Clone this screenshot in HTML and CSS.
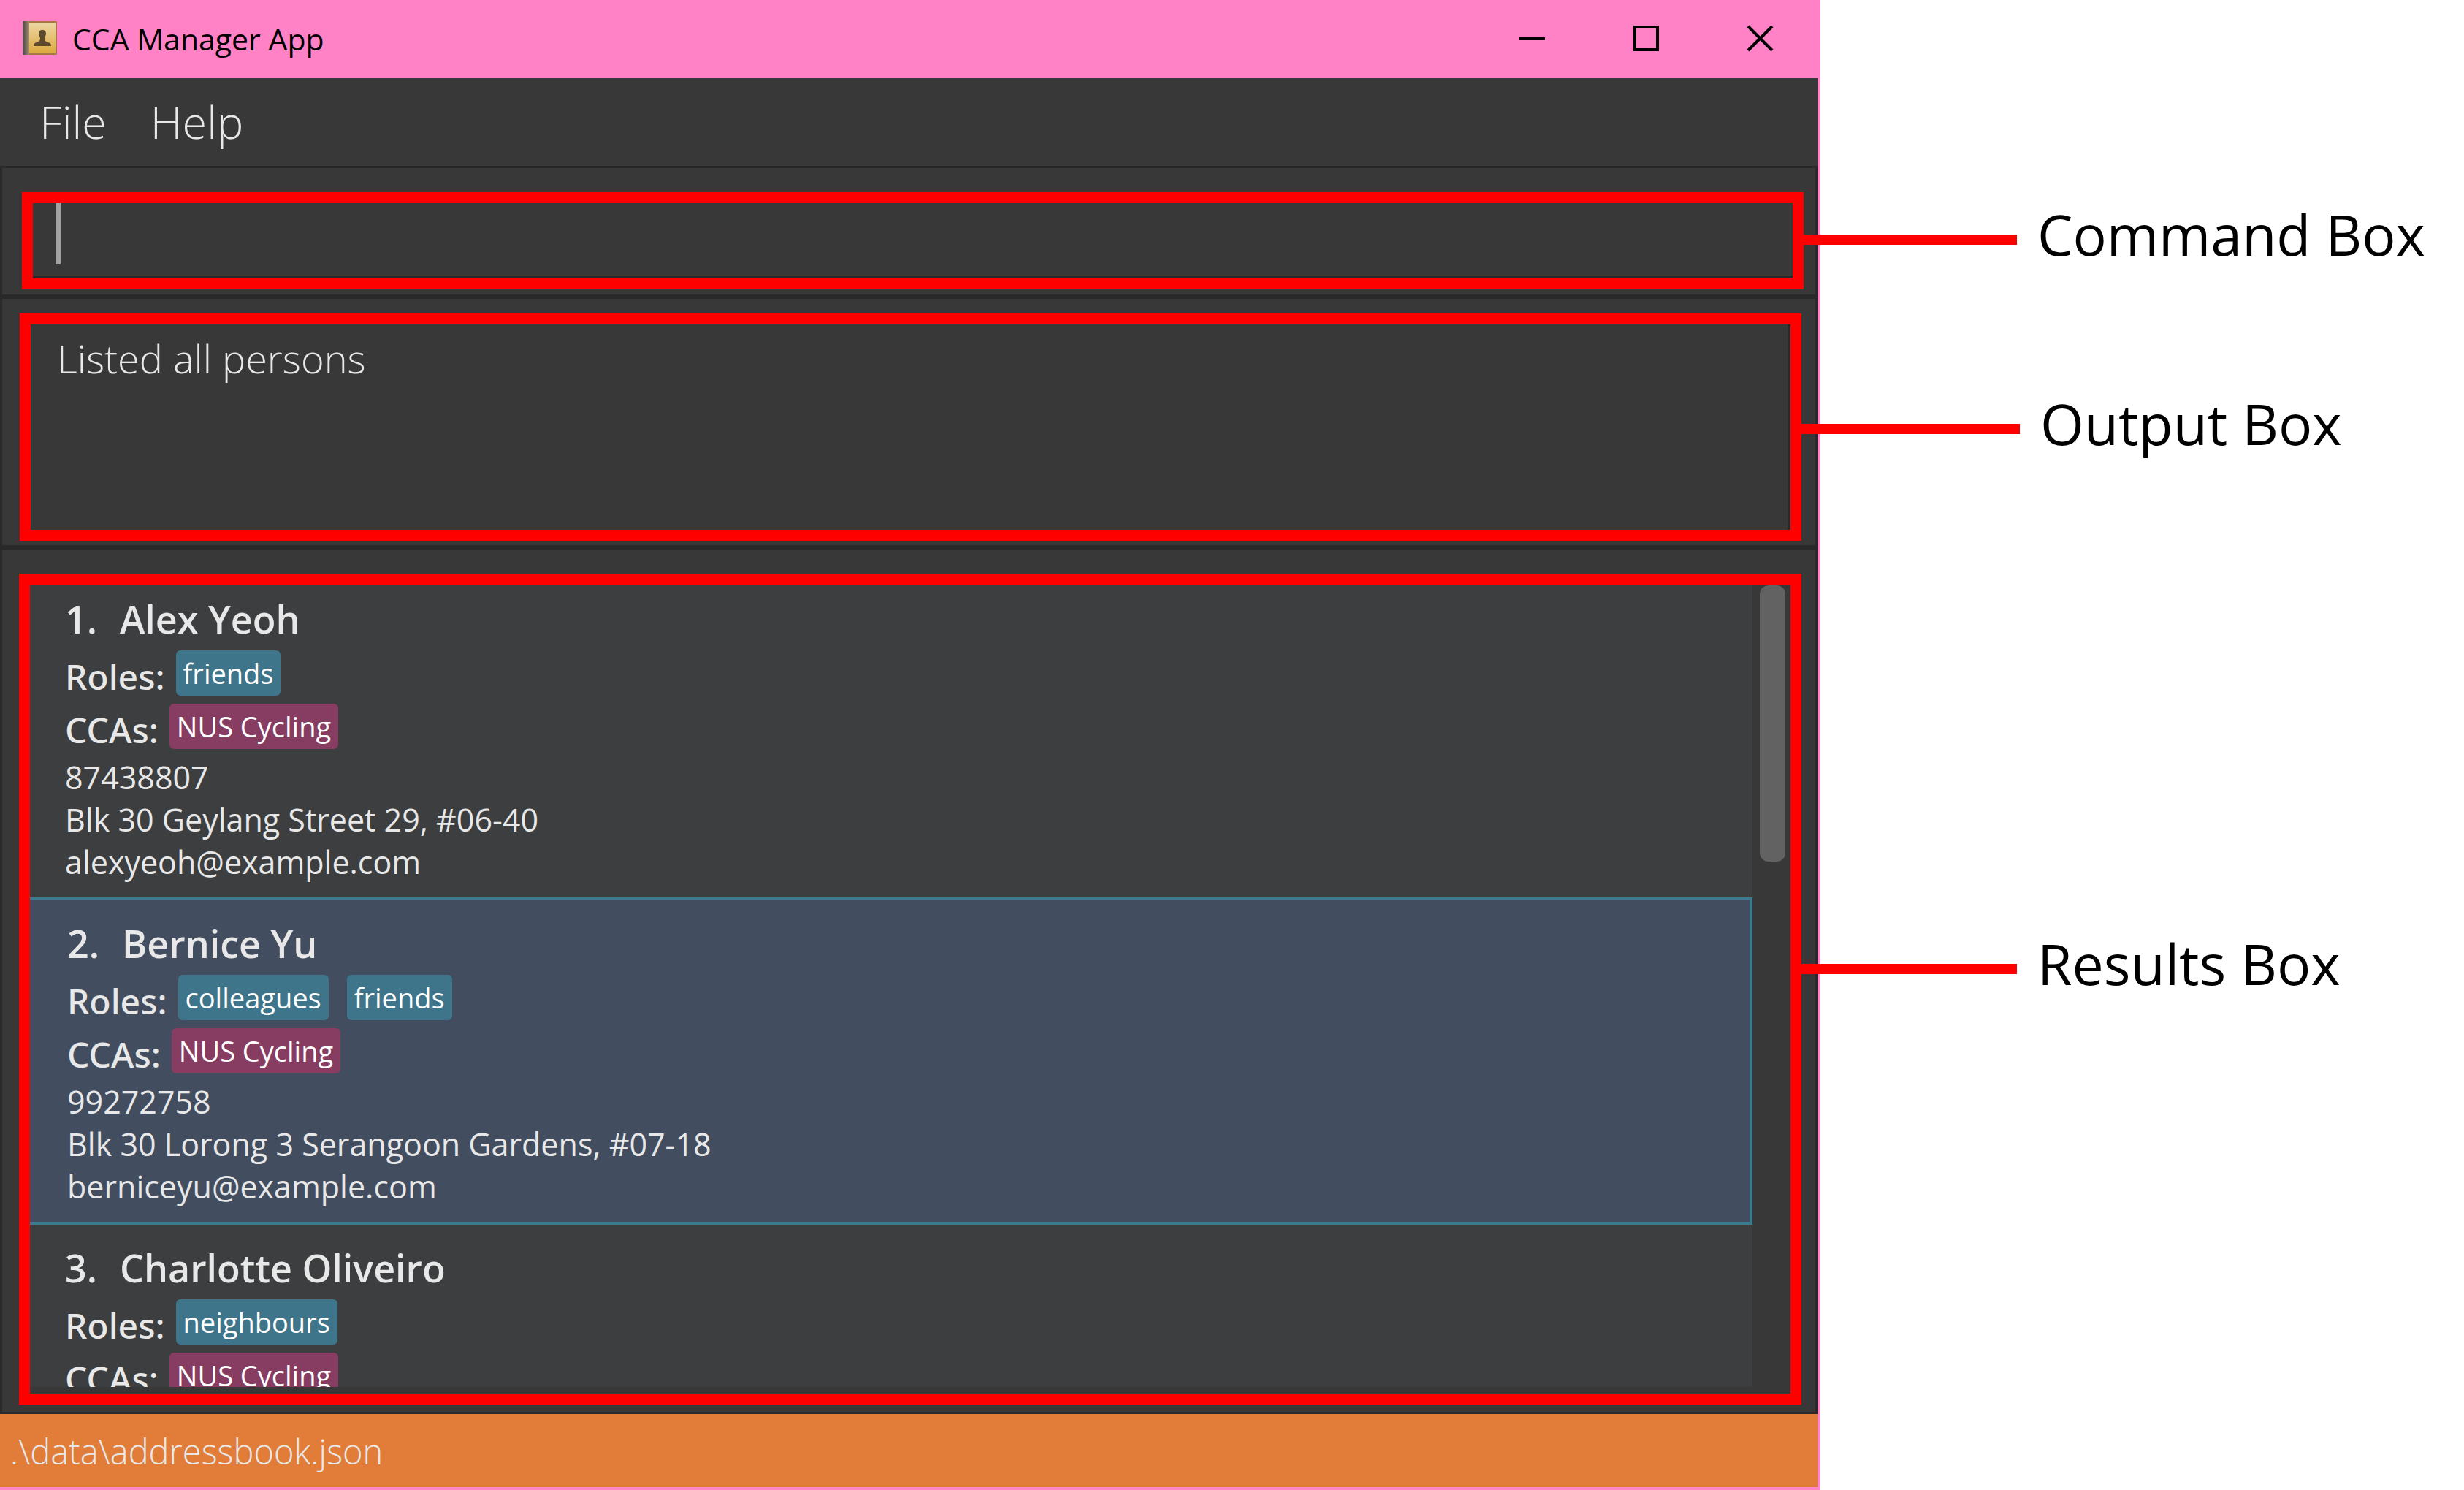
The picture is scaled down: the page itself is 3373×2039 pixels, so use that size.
FILE: index.html
```html
<!DOCTYPE html>
<html lang="en">
<head>
<meta charset="utf-8">
<title>CCA Manager App</title>
<link rel="stylesheet" href="styles.css">
</head>
<body>
<main class="app-window">
  <header class="titlebar">
    <svg class="app-icon" viewBox="0 0 49 48" aria-hidden="true">
      <defs>
        <linearGradient id="cover" x1="0" y1="0" x2="0" y2="1">
          <stop offset="0" stop-color="#ecd6a4"/>
          <stop offset="1" stop-color="#dda93f"/>
        </linearGradient>
        <linearGradient id="spine" x1="0" y1="0" x2="1" y2="0">
          <stop offset="0" stop-color="#4a4542"/>
          <stop offset="1" stop-color="#a08c70"/>
        </linearGradient>
      </defs>
      <rect x="1" y="1" width="47" height="46" rx="1" fill="#a87840"/>
      <rect x="8" y="3" width="38" height="42" fill="url(#cover)"/>
      <rect x="1" y="1" width="9" height="46" fill="url(#spine)"/>
      <path d="M28 13c3 0 5 2 5 5 0 3-2 4-2 7 0 3 2 4 5 5 3 1 4 2 4 5H16c0-3 1-4 4-5 3-1 5-2 5-5 0-3-2-4-2-7 0-3 2-5 5-5z" fill="#5d4a2c"/>
    </svg>
    <h1 class="title">CCA Manager App</h1>
    <div class="controls">
      <button class="control" type="button" aria-label="Minimize"><svg viewBox="0 0 37 37"><path d="M1 19h35"/></svg></button>
      <button class="control" type="button" aria-label="Maximize"><svg viewBox="0 0 37 37"><path d="M3 3h31v31H3z"/></svg></button>
      <button class="control" type="button" aria-label="Close"><svg viewBox="0 0 37 37"><path d="M2 2l33 33M35 2L2 35"/></svg></button>
    </div>
  </header>

  <nav class="menubar">
    <button class="menu" type="button">File</button>
    <button class="menu" type="button">Help</button>
  </nav>

  <section class="pane pane-command">
    <div class="frame">
      <div class="command-field">
        <input class="command-input" type="text" aria-label="Command">
        <span class="caret"></span>
      </div>
      <div class="callout"><span class="leader"></span><span class="callout-text">Command Box</span></div>
    </div>
  </section>

  <section class="pane pane-output">
    <div class="frame">
      <output class="output">Listed all persons</output>
      <div class="callout"><span class="leader"></span><span class="callout-text">Output Box</span></div>
    </div>
  </section>

  <section class="pane pane-results">
    <div class="frame">
      <ul class="persons">
        <li class="person">
          <h2 class="name"><span>1.</span><span>Alex Yeoh</span></h2>
          <div class="tags"><span class="tags-label">Roles:</span><span class="tag role">friends</span></div>
          <div class="tags"><span class="tags-label">CCAs:</span><span class="tag cca">NUS Cycling</span></div>
          <p class="detail">87438807</p>
          <p class="detail">Blk 30 Geylang Street 29, #06-40</p>
          <p class="detail">alexyeoh@example.com</p>
        </li>
        <li class="person selected">
          <h2 class="name"><span>2.</span><span>Bernice Yu</span></h2>
          <div class="tags"><span class="tags-label">Roles:</span><span class="tag role">colleagues</span><span class="tag role">friends</span></div>
          <div class="tags"><span class="tags-label">CCAs:</span><span class="tag cca">NUS Cycling</span></div>
          <p class="detail">99272758</p>
          <p class="detail">Blk 30 Lorong 3 Serangoon Gardens, #07-18</p>
          <p class="detail">berniceyu@example.com</p>
        </li>
        <li class="person">
          <h2 class="name"><span>3.</span><span>Charlotte Oliveiro</span></h2>
          <div class="tags"><span class="tags-label">Roles:</span><span class="tag role">neighbours</span></div>
          <div class="tags"><span class="tags-label">CCAs:</span><span class="tag cca">NUS Cycling</span></div>
        </li>
      </ul>
      <div class="scrollbar"><div class="thumb"></div></div>
      <div class="callout"><span class="leader"></span><span class="callout-text">Results Box</span></div>
    </div>
  </section>

  <footer class="statusbar">.\data\addressbook.json</footer>
</main>
</body>
</html>
```
FILE: styles.css
```css
* { box-sizing: border-box; }

body {
  margin: 0;
  background: #fff;
  color: #e8e8e8;
  font-family: "Open Sans", "Noto Sans", sans-serif;
}

button { font: inherit; color: inherit; background: none; border: 0; padding: 0; }
h1, h2, p, ul { margin: 0; padding: 0; font-weight: 400; }

.app-window {
  display: flex;
  flex-direction: column;
  width: 73.88%;
  height: 100vh;
  background: #383838;
  border: solid #ff87c8;
  border-width: 0 4px 4px 0;
}

.titlebar {
  display: flex;
  align-items: center;
  gap: 20px;
  height: 107px;
  padding: 0 64px 3px 30px;
  margin-right: -4px;
  background: #ff82c6;
  color: #000;
}
.app-icon { width: 49px; height: 48px; }
.title { padding-top: 2px; font-size: 41px; line-height: 60px; }
.controls { display: flex; gap: 119px; margin-left: auto; }
.control { display: flex; }
.control svg { width: 37px; height: 37px; fill: none; stroke: #000; stroke-width: 4; }

.menubar { display: flex; gap: 60px; height: 120px; padding: 0 54px; }
.menu { font-size: 61px; font-weight: 300; line-height: 118px; }

.pane { display: flex; border: 3px solid #292929; }
.pane-command { padding: 33px 16px 7px 27px; }
.pane-output { padding: 20px 19px 6px 24px; }
.pane-results { flex: 1; min-height: 0; padding: 33px 19px 10px 23px; }

.frame { position: relative; display: flex; flex: 1; min-width: 0; border: 15px solid #f00; }

.command-field {
  display: flex;
  flex: 1;
  position: relative;
  height: 103px;
  border-bottom: 3px solid #292929;
}
.command-input { flex: 1; border: 0; outline: 0; padding: 0 34px; background: none; color: inherit; font: inherit; font-size: 54px; }
.caret { position: absolute; left: 31px; top: 0; width: 7px; height: 83px; background: #a2a2a2; }

.output {
  flex: 1;
  min-height: 281px;
  padding: 8px 36px;
  border-right: 4px solid #292929;
  font-size: 54px;
  font-weight: 300;
  line-height: 76px;
}

.persons { flex: 1; min-width: 0; margin-bottom: 9px; overflow: hidden; list-style: none; background: #3c3e3f; }
.person { margin-bottom: -4px; padding: 21px 47px 23px 48px; }
.person:first-child { padding-top: 5px; }
.selected { padding: 17px 47px 19px 51px; background: #424d5f; border: solid #3e7b91; border-width: 4px 4px 4px 0; }
.name { display: flex; gap: 31px; font-size: 52px; font-weight: 600; line-height: 84px; }
.tags { display: flex; gap: 25px; height: 73px; }
.tags-label { margin-right: -10px; font-family: "Noto Sans", sans-serif; font-size: 48px; font-weight: 500; line-height: 73px; }
.tag { height: 62px; margin-top: 1px; padding: 0 10px; border-radius: 6px; color: #fff; font-size: 38px; line-height: 62px; }
.role { background: #3e758a; }
.cca { background: #873c62; }
.detail { font-size: 43px; line-height: 58px; }

.scrollbar { width: 52px; padding: 1px 7px 0 10px; }
.thumb { height: 378px; border-radius: 12px; background: #626262; }

/* Labels that point at each part of the window */
.callout { position: absolute; left: 100%; top: 49%; display: flex; align-items: center; gap: 28px; height: 100px; margin: -50px 0 0 15px; white-space: nowrap; }
.pane-output .callout { top: 51%; }
.pane-results .callout { top: calc(50% - 28px); }
.leader { width: 292px; height: 14px; background: #f00; }
.pane-output .leader { width: 299px; }
.pane-results .leader { width: 295px; }
.callout-text { padding-bottom: 14px; color: #000; font-size: 77px; line-height: 100px; }

.statusbar { height: 100px; padding: 0 14px; background: #e17d38; font-size: 47px; font-weight: 300; line-height: 102px; }
```
